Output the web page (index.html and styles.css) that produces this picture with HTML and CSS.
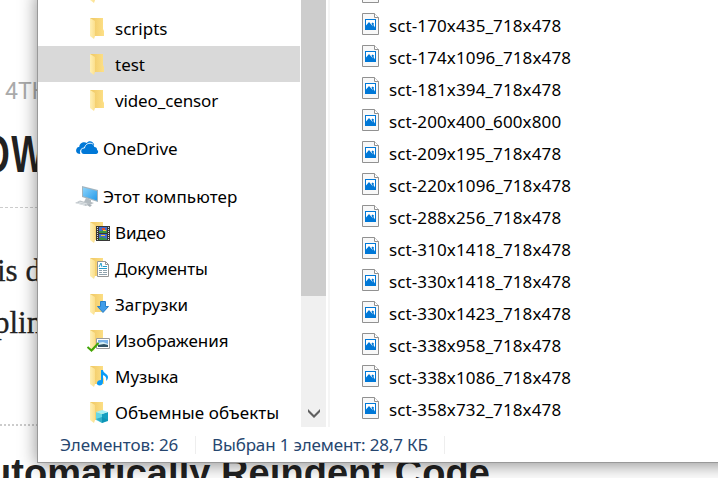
FILE: index.html
```html
<!DOCTYPE html>
<html lang="ru">
<head>
<meta charset="utf-8">
<title>Explorer</title>
<link rel="stylesheet" href="styles.css">
</head>
<body>
<svg class="defs" aria-hidden="true">
  <defs>
    <linearGradient id="gold" x1="0" x2="1"><stop offset="0" stop-color="#efc763"/><stop offset="1" stop-color="#fde087"/></linearGradient>
    <linearGradient id="pale" x1="0" x2="1"><stop offset="0" stop-color="#fff0b5"/><stop offset="1" stop-color="#fbdf8c"/></linearGradient>
    <linearGradient id="screen" x1="0" y1="0" x2="1" y2="1"><stop offset="0" stop-color="#8bd3fb"/><stop offset="1" stop-color="#249ae9"/></linearGradient>
    <symbol id="folder" viewBox="0 0 26 26">
      <path d="M4 3h13v11l1 2v5H8z" fill="url(#gold)"/>
      <path d="M4 3l5 3v15l-1 3-4-3z" fill="url(#pale)"/>
    </symbol>
    <symbol id="image-file" viewBox="0 0 17 22">
      <path d="M.5.5h12l4 4v17H.5z" fill="#f8f8f8" stroke="#919191"/>
      <path d="M12.500.5v4h4" fill="#fff" stroke="#919191"/>
      <path d="M3 6h11v11H3z" fill="#0078d7"/>
      <path d="M4 7h9v7.500L11.500 12 12 10.500 10.500 9.500 9.500 10.500 11 13.500 7 9 4 12.500z" fill="#fff"/>
    </symbol>
  </defs>
</svg>
<div class="page">
  <p class="date">4TH</p>
  <p class="title"><span>OW</span></p>
  <p class="body one">is d</p>
  <p class="body two">plin</p>
  <p class="heading">utomatically Reindent Code</p>
</div>
<main class="window">
  <div class="content">
    <nav class="tree">
      <div class="row sub"><svg class="icon"><use href="#folder"/></svg></div>
      <div class="row sub"><svg class="icon"><use href="#folder"/></svg><span>scripts</span></div>
      <div class="row sub selected"><svg class="icon"><use href="#folder"/></svg><span>test</span></div>
      <div class="row sub"><svg class="icon"><use href="#folder"/></svg><span class="tight">video_censor</span></div>
      <div class="row root"><svg class="icon" viewBox="0 0 26 26"><g transform="translate(-.5 0) scale(.94 1)"><path d="M5 19C1 19 0 16 1 14s2-2 3-2c0-4 5-6 8-4 2-3 7-2 8 2-5-2-8 0-9 3-4 0-6 3-6 6z" fill="#0078d7"/><path d="M9 19c-4 0-4-6 1-6 1-6 9-6 10-1 2 0 3 1 3 3 2 1 1 4-1 4z" fill="#0078d7"/><path d="M5.500 18c-1-3 1-5 4-5 1-4 5-6 9-4" fill="none" stroke="#fff"/></g></svg><span class="tight">OneDrive</span></div>
      <div class="row root"><svg class="icon" viewBox="0 0 26 26"><path d="M10 15l5 2v2l3 1-5 2-5-3z" fill="#b3bbc0"/><path d="M6 3l16 4v12L6 14z" fill="#a3b4be"/><path d="M7 4.500L21 8v9.500L7 13z" fill="url(#screen)"/><path d="M-1 20l5-2.500 10 3-4 2.500z" fill="#bbc2c7"/><path d="M11 22l2-1 3 1-2 2z" fill="#aab2b8"/><path d="M1 20l8 2M3 19l8 2" stroke="#eef2f4" stroke-width=".7"/></svg><span class="wide">Этот компьютер</span></div>
      <div class="row sub"><svg class="icon" viewBox="0 0 26 26"><use href="#folder" width="26" height="26"/><path d="M10 7h14v15H10z" fill="#373737"/><path d="M13 8h8v6h-8zM13 15h8v6h-8z" fill="#426bce"/><path d="M11.500 8v14M22.500 8v14" stroke="#ddd" stroke-dasharray="1 1"/><path d="M13 12h3l2-2 3 2v2h-8zM13 19l3-1 5 2v1h-8z" fill="#379443"/><path d="M16 9h3v2h-3z" fill="#e44d2b"/><path d="M17 11h3v1h-3zM15 16h4v1h-4z" fill="#f5c835"/></svg><span class="tight">Видео</span></div>
      <div class="row sub"><svg class="icon" viewBox="0 0 26 26"><use href="#folder" width="26" height="26"/><path d="M11.500 6.500h8l3 3v12h-11z" fill="#fff" stroke="#969696"/><path d="M19.500 6.500v3h3" fill="none" stroke="#969696"/><path d="M13 12l2-4 1 4M17 11.500h4M13 13.500h8" fill="none" stroke="#269dcc"/><path d="M13 15.500h3M17 15.500h4M13 17.500h3M17 17.500h4M13 19.500h8" stroke="#8fa2ad"/></svg><span class="tight">Документы</span></div>
      <div class="row sub"><svg class="icon" viewBox="0 0 26 26"><use href="#folder" width="26" height="26"/><path d="M14.500 10.500h5v5h3L17 21.500 11.500 15.500h3z" fill="#419de9" stroke="#2980ca"/></svg><span>Загрузки</span></div>
      <div class="row sub"><svg class="icon" viewBox="0 0 26 26"><use href="#folder" width="26" height="26"/><path d="M10.500 11.500h13v10h-13z" fill="#fff" stroke="#9c9c9c"/><path d="M12 13h10v7H12z" fill="#78b1e7"/><path d="M12 16l5-1 5 2v1H12z" fill="#d9f0f6"/><path d="M12 18l6-1 4 1v2H12z" fill="#315366"/><path d="M1.500 20l4 3.500L12.500 16" fill="none" stroke="#42a507" stroke-width="2"/></svg><span>Изображения</span></div>
      <div class="row sub"><svg class="icon" viewBox="0 0 26 26"><use href="#folder" width="26" height="26"/><path d="M15 7h2c0 3 5 4 5 7 0 2-1 3-2 4 1-4-1-5-3-6v7c0 5-7 4-6 1 0-2 2-3 4-3z" fill="#0b9cf7"/></svg><span>Музыка</span></div>
      <div class="row sub"><svg class="icon" viewBox="0 0 26 26"><use href="#folder" width="26" height="26"/><path d="M10 13l6 2v9l-6-3z" fill="#65d7e6"/><path d="M16 15l6-2v9l-6 2z" fill="#159fc0"/><path d="M10 13l6-2 6 2-6 2z" fill="#a4eff4"/><path d="M10 20l6-2 6 3-6 3z" fill="#078bad" opacity=".55"/></svg><span class="wide">Объемные объекты</span></div>
    </nav>
    <div class="scrollbar"><div class="thumb"></div><svg class="chevron" viewBox="0 0 12 10"><path d="M0 0l6 6 6-6v3L6 9 0 3z" fill="#606060"/></svg></div>
    <div class="divider"></div>
    <section class="files">
      <div class="file"><svg><use href="#image-file"/></svg></div>
      <div class="file"><svg><use href="#image-file"/></svg><span>sct-170x435_718x478</span></div>
      <div class="file"><svg><use href="#image-file"/></svg><span>sct-174x1096_718x478</span></div>
      <div class="file"><svg><use href="#image-file"/></svg><span>sct-181x394_718x478</span></div>
      <div class="file"><svg><use href="#image-file"/></svg><span>sct-200x400_600x800</span></div>
      <div class="file"><svg><use href="#image-file"/></svg><span>sct-209x195_718x478</span></div>
      <div class="file"><svg><use href="#image-file"/></svg><span>sct-220x1096_718x478</span></div>
      <div class="file"><svg><use href="#image-file"/></svg><span>sct-288x256_718x478</span></div>
      <div class="file"><svg><use href="#image-file"/></svg><span>sct-310x1418_718x478</span></div>
      <div class="file"><svg><use href="#image-file"/></svg><span>sct-330x1418_718x478</span></div>
      <div class="file"><svg><use href="#image-file"/></svg><span>sct-330x1423_718x478</span></div>
      <div class="file"><svg><use href="#image-file"/></svg><span>sct-338x958_718x478</span></div>
      <div class="file"><svg><use href="#image-file"/></svg><span>sct-338x1086_718x478</span></div>
      <div class="file"><svg><use href="#image-file"/></svg><span>sct-358x732_718x478</span></div>
    </section>
  </div>
  <footer class="status"><span class="count">Элементов: 26</span><span class="picked">Выбран 1 элемент: 28,7 КБ</span></footer>
</main>
</body>
</html>
```
FILE: styles.css
```css
* { box-sizing: border-box; }
body { margin: 0; width: 718px; height: 478px; overflow: hidden; position: relative; background: #fff; color: #000; font: 17px/24px "Noto Sans", "Open Sans", sans-serif; }
p { margin: 0; white-space: nowrap; }
.defs { position: absolute; width: 0; height: 0; }
.page { height: 478px; overflow: hidden; color: #222; }
.date { height: 109px; padding: 77px 0 0 5px; font: 23px/30px Roboto, sans-serif; color: #aaa; }
.title { height: 99px; border-bottom: 1px dashed #ccc; font: bold 51px/92px "Liberation Sans", sans-serif; }
.title span { display: inline-block; margin-left: -18px; transform: scaleX(.7); transform-origin: 0 0; letter-spacing: 2px; }
.body { font: 31px/52px "Liberation Serif", serif; -webkit-text-stroke: .3px #222; }
.one { padding-top: 37px; height: 89px; text-indent: -3px; }
.two { height: 129px; border-bottom: 2px dotted #ccc; text-indent: -6px; }
.heading { font: bold 38px/44px "Liberation Sans", sans-serif; padding-top: 25px; text-indent: -12px; letter-spacing: .06px; }
.window { position: absolute; left: 37px; top: -10px; width: 700px; height: 473px; background: #fff; border: 1px solid #999; box-shadow: 0 2px 17px rgba(0,0,0,.45); }
.content { display: flex; height: 436px; overflow: hidden; }
.tree { width: 262px; margin-top: -17px; flex: none; }
.row { display: flex; align-items: center; height: 36px; white-space: nowrap; }
.row span { padding-top: 1px; line-height: 25px; }
.tight { letter-spacing: -.12px; }
.wide { letter-spacing: .08px; }
.icon { width: 26px; height: 26px; flex: none; overflow: visible; }
.sub { padding-left: 48px; gap: 3px; }
.selected { background: #d9d9d9; }
.root { margin-top: 12px; padding-left: 38px; gap: 1px; }
.scrollbar { margin-left: 1px; width: 25px; background: #f0f0f0; display: flex; flex-direction: column; justify-content: space-between; align-items: center; }
.thumb { width: 25px; height: 305px; background: #cdcdcd; }
.chevron { width: 12px; height: 10px; margin-bottom: 8px; }
.divider { width: 2px; margin-left: 2px; background: #f5f5f5; }
.files { margin-top: -13px; padding-left: 32px; }
.file { display: flex; align-items: center; height: 32px; gap: 10px; white-space: nowrap; }
.file svg { width: 17px; height: 22px; margin-top: -4px; flex: none; }
.file span { letter-spacing: .11px; }
.status { height: 35px; display: flex; align-items: center; padding: 1px 0 0 22px; color: #26466f; font-size: 17px; }
.status span { border-right: 1px solid #eee; line-height: 18px; white-space: nowrap; }
.count { width: 136px; letter-spacing: -.05px; }
.picked { width: 249px; padding-left: 16px; letter-spacing: -.15px; }
```
